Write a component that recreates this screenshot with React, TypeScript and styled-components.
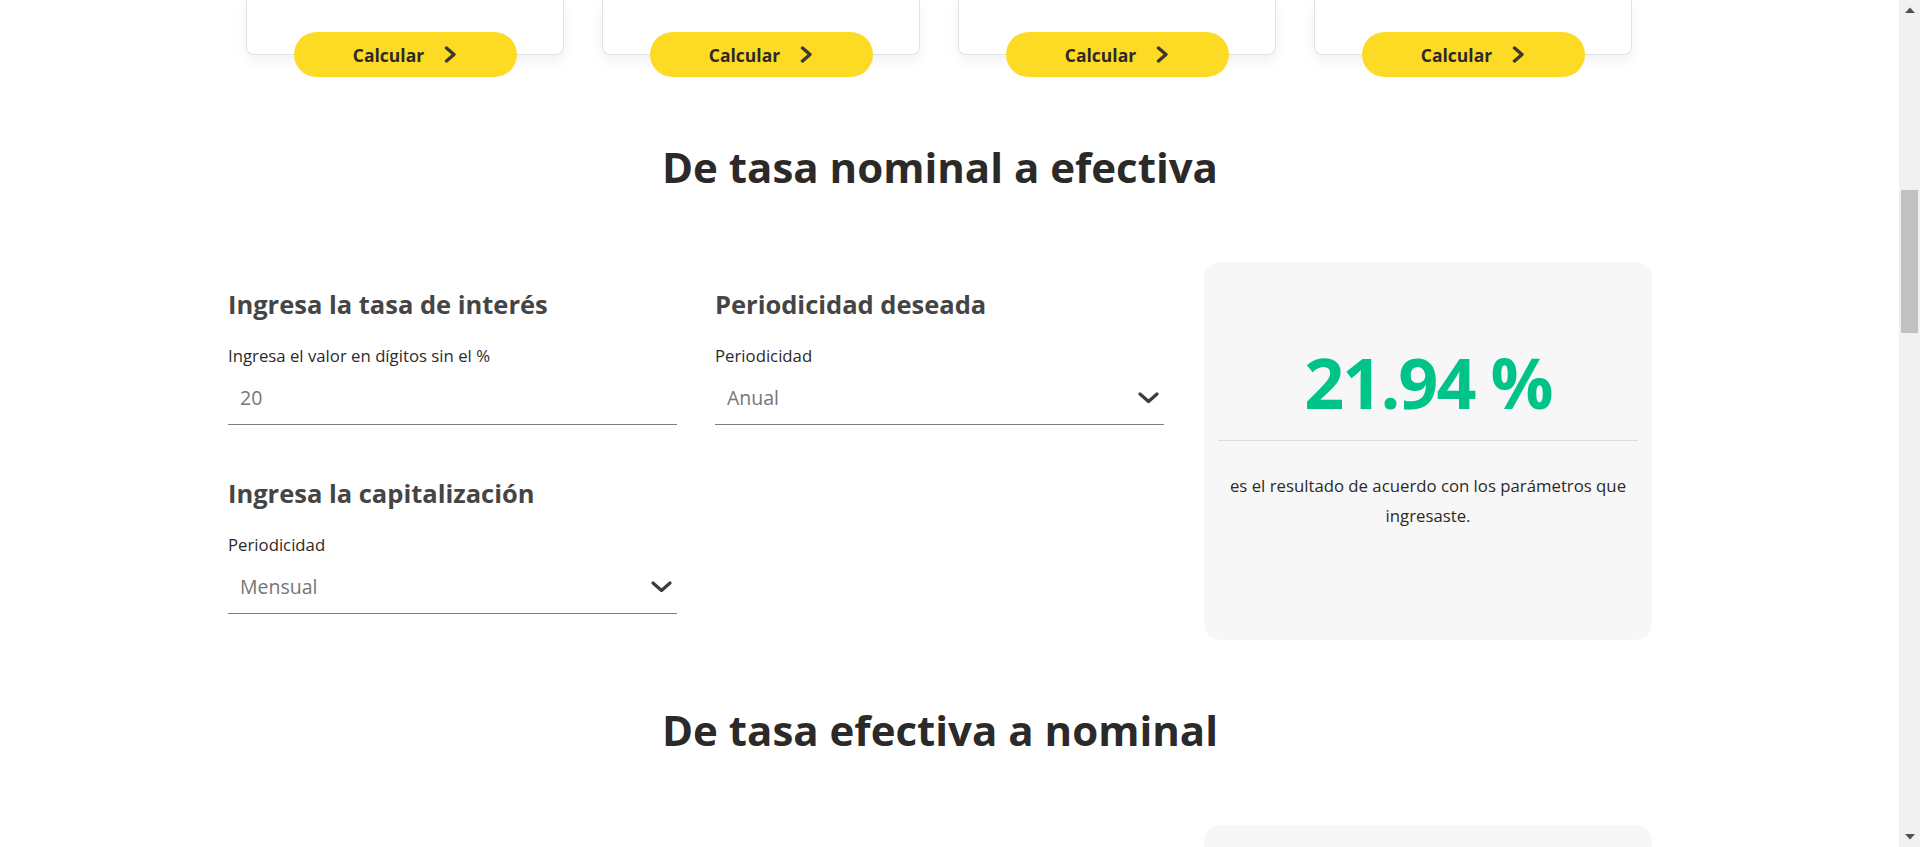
import React from "react";
import styled, { createGlobalStyle } from "styled-components";

const GlobalStyle = createGlobalStyle`
  html, body {
    margin: 0;
    padding: 0;
    background: #ffffff;
  }
  body {
    font-family: "Open Sans", "Noto Sans", "Liberation Sans", sans-serif;
    color: #2c2a29;
  }
  *, *::before, *::after {
    box-sizing: border-box;
  }
`;

const Page = styled.div`
  width: 1880px;
  padding-bottom: 160px;
`;

const Container = styled.main`
  width: 1424px;
  margin: 0 auto;
`;

const CardsRow = styled.div`
  display: grid;
  grid-template-columns: repeat(4, 318px);
  column-gap: 38px;
  padding: 0 18px;
`;

const CardColumn = styled.div`
  display: flex;
  flex-direction: column;
  align-items: center;
`;

const Card = styled.div`
  width: 100%;
  height: 55px;
  background: #ffffff;
  border: 1px solid #e2e2e2;
  border-top: none;
  border-radius: 0 0 8px 8px;
  box-shadow: 0 6px 14px rgba(0, 0, 0, 0.06);
`;

const CalcButton = styled.button`
  margin-top: -23px;
  width: 223px;
  height: 45px;
  padding: 0;
  border: none;
  border-radius: 23px;
  background: #fdda24;
  display: flex;
  align-items: center;
  justify-content: center;
  gap: 20px;
  font-family: inherit;
  font-size: 17.5px;
  font-weight: 700;
  color: #2c2a29;
  cursor: pointer;
`;

const Section = styled.section`
  padding-top: 64px;
`;

const SectionTitle = styled.h2`
  margin: 0;
  text-align: center;
  font-size: 42px;
  line-height: 52px;
  font-weight: 700;
  color: #2c2a29;
`;

const CalcRow = styled.div`
  display: flex;
  gap: 40px;
  margin-top: 69px;
  align-items: stretch;
`;

const Form = styled.div`
  width: 936px;
  display: grid;
  grid-template-columns: 449px 449px;
  column-gap: 38px;
  row-gap: 52px;
  padding-top: 26px;
  align-content: start;
`;

const FieldGroup = styled.div`
  display: flex;
  flex-direction: column;
`;

const FieldHeading = styled.h3`
  margin: 0;
  font-size: 25.5px;
  line-height: 32px;
  font-weight: 700;
  color: #454545;
`;

const FieldLabel = styled.label`
  margin-top: 24px;
  font-size: 16.75px;
  line-height: 24px;
  color: #2c2a29;
`;

const InputBox = styled.div`
  height: 57px;
  display: flex;
  align-items: center;
  justify-content: space-between;
  padding: 3px 5px 0 12px;
  border-bottom: 1px solid #7f7f7f;
  font-size: 19.5px;
  line-height: 24px;
  color: #767676;
`;

const ResultBox = styled.div`
  width: 448px;
  min-height: 378px;
  background: #f7f7f7;
  border-radius: 16px;
  padding: 0 14px 40px;
  display: flex;
  flex-direction: column;
  text-align: center;
`;

const ResultValue = styled.div`
  margin-top: 85px;
  font-size: 70px;
  line-height: 70px;
  font-weight: 700;
  letter-spacing: -2px;
  color: #00c389;
`;

const Divider = styled.hr`
  margin: 23px 0 0;
  border: none;
  height: 1px;
  background: #dcdcdc;
`;

const ResultText = styled.p`
  margin: 30px 0 0;
  font-size: 16.75px;
  line-height: 30px;
  color: #2c2a29;
`;

/* Browser scrollbar as it appears in the captured window */
const ScrollTrack = styled.div`
  position: fixed;
  top: 0;
  right: 0;
  width: 21px;
  height: 100vh;
  background: #f1f1f1;
  display: flex;
  flex-direction: column;
  align-items: center;
  justify-content: space-between;
  padding: 7px 0;
  pointer-events: none;
`;

const ScrollThumb = styled.div`
  position: absolute;
  top: 190px;
  left: 2px;
  width: 17px;
  height: 143px;
  background: #c1c1c1;
`;

const ChevronRight = () => (
  <svg width="13" height="17" viewBox="0 0 13 17" fill="none" aria-hidden="true">
    <polyline
      points="2.5,2 10,8.5 2.5,15"
      stroke="#3a3a3a"
      strokeWidth="3.4"
      strokeLinecap="round"
      strokeLinejoin="round"
    />
  </svg>
);

const ChevronDown = () => (
  <svg width="21" height="12" viewBox="0 0 21 12" fill="none" aria-hidden="true">
    <polyline
      points="2,2 10.5,9.5 19,2"
      stroke="#3c3c3c"
      strokeWidth="3.2"
      strokeLinecap="round"
      strokeLinejoin="round"
    />
  </svg>
);

const ArrowUp = () => (
  <svg width="10" height="6" viewBox="0 0 10 6" aria-hidden="true">
    <polygon points="0,6 5,0.5 10,6" fill="#505050" />
  </svg>
);

const ArrowDown = () => (
  <svg width="10" height="6" viewBox="0 0 10 6" aria-hidden="true">
    <polygon points="0,0 10,0 5,5.5" fill="#505050" />
  </svg>
);

type FieldProps = {
  heading: string;
  label: string;
  value: string;
  select?: boolean;
};

const Field = ({ heading, label, value, select }: FieldProps) => (
  <FieldGroup>
    <FieldHeading>{heading}</FieldHeading>
    <FieldLabel>{label}</FieldLabel>
    <InputBox>
      <span>{value}</span>
      {select && <ChevronDown />}
    </InputBox>
  </FieldGroup>
);

type CalcSectionProps = {
  title: string;
  result?: string;
  fields?: FieldProps[];
};

const CalcSection = ({ title, result, fields = [] }: CalcSectionProps) => (
  <Section>
    <SectionTitle>{title}</SectionTitle>
    <CalcRow>
      <Form>
        {fields.map((f) => (
          <Field key={f.heading} {...f} />
        ))}
      </Form>
      <ResultBox>
        {result && (
          <>
            <ResultValue>{result}</ResultValue>
            <Divider />
            <ResultText>es el resultado de acuerdo con los parámetros que ingresaste.</ResultText>
          </>
        )}
      </ResultBox>
    </CalcRow>
  </Section>
);

export default function App() {
  return (
    <>
      <GlobalStyle />
      <Page>
        <Container>
          <CardsRow>
            {[0, 1, 2, 3].map((i) => (
              <CardColumn key={i}>
                <Card />
                <CalcButton type="button">
                  <span>Calcular</span>
                  <ChevronRight />
                </CalcButton>
              </CardColumn>
            ))}
          </CardsRow>

          <CalcSection
            title="De tasa nominal a efectiva"
            result="21.94 %"
            fields={[
              { heading: "Ingresa la tasa de interés", label: "Ingresa el valor en dígitos sin el %", value: "20" },
              { heading: "Periodicidad deseada", label: "Periodicidad", value: "Anual", select: true },
              { heading: "Ingresa la capitalización", label: "Periodicidad", value: "Mensual", select: true },
            ]}
          />

          <CalcSection title="De tasa efectiva a nominal" />
        </Container>
      </Page>
      <ScrollTrack aria-hidden="true">
        <ArrowUp />
        <ScrollThumb />
        <ArrowDown />
      </ScrollTrack>
    </>
  );
}
